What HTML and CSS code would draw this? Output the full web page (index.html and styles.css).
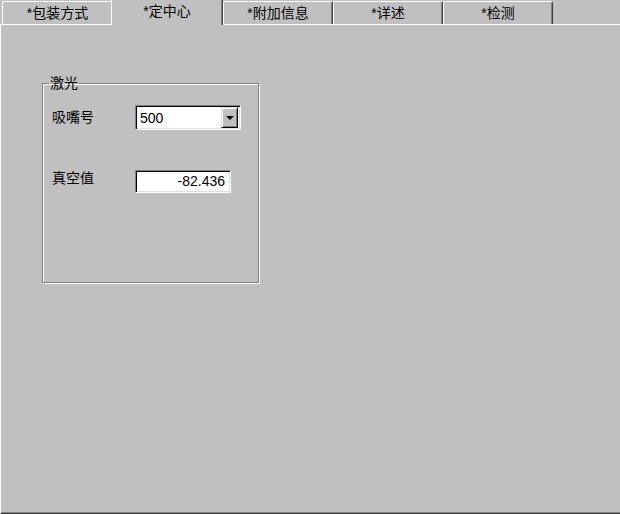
FILE: index.html
```html
<!DOCTYPE html>
<html lang="zh-CN">
<head>
    <meta charset="UTF-8">
    <meta name="viewport" content="width=device-width, initial-scale=1.0">
    <title>定中心</title>
    <link rel="stylesheet" href="styles.css">
</head>
<body>

<div class="window">
    <div class="tabs">
        <div class="tab tab-first">*包装方式</div>
        <div class="tab tab-active">*定中心</div>
        <div class="tab">*附加信息</div>
        <div class="tab">*详述</div>
        <div class="tab">*检测</div>
    </div>

    <div class="panel">
        <fieldset class="group">
            <legend>激光</legend>
            <div class="rows">
                <div class="row">
                    <span class="label label-combo">吸嘴号</span>
                    <div class="combo">
                        <span class="combo-text">500</span>
                        <span class="combo-btn"><span class="arrow"></span></span>
                    </div>
                </div>
                <div class="row row-value">
                    <span class="label">真空值</span>
                    <div class="edit">-82.436</div>
                </div>
            </div>
        </fieldset>
    </div>
</div>

</body>
</html>
```

FILE: styles.css
```css
body {
    margin: 0;
    padding: 0;
    background-color: #c0c0c0;
    font-family: "Liberation Sans", "Noto Sans CJK SC", sans-serif;
    font-size: 14px;
    color: #000;
}
.window {
    height: 514px;
    display: flex;
    flex-direction: column;
    overflow: hidden;
}

/* tab strip */
.tabs {
    display: flex;
    align-items: flex-end;
    height: 25px;
    padding-left: 2px;
    border-bottom: 1px solid #fff;
    box-sizing: border-box;
}
.tab {
    width: 110px;
    height: 23px;
    box-sizing: border-box;
    display: flex;
    align-items: center;
    justify-content: center;
    border-top: 1px solid #fff;
    border-left: 1px solid #fff;
    border-right: 1px solid #404040;
    box-shadow: inset -1px 0 #808080;
    border-radius: 2px 2px 0 0;
    line-height: 16px;
}
.tab-first {
    border-right: none;
    box-shadow: none;
}
.tab-active {
    position: relative;
    z-index: 1;
    width: 112px;
    height: 26px;
    margin-left: -1px;
    margin-bottom: -1px;
    padding-bottom: 4px;
    background-color: #c0c0c0;
}

/* page body */
.panel {
    flex: 1;
    border-left: 1px solid #fff;
    border-bottom: 1px solid #404040;
    box-shadow: inset 0 -1px #808080;
}
.group {
    width: 217px;
    height: 208px;
    box-sizing: border-box;
    margin: 50px 0 0 41px;
    padding: 0;
    border: 1px solid #808080;
    box-shadow: inset 1px 1px #fff, 1px 1px #fff;
}
.group legend {
    margin-left: 6px;
    padding: 0 1px;
    line-height: 16px;
}
.rows {
    padding: 14px 0 0 9px;
}
.row {
    display: flex;
    align-items: flex-start;
}
.row-value {
    margin-top: 40px;
}
.label {
    width: 83px;
    line-height: 16px;
}
.label-combo {
    line-height: 25px;
}

/* sunken controls */
.combo,
.edit {
    box-sizing: border-box;
    background-color: #fff;
    border: 1px solid;
    border-color: #808080 #fff #fff #808080;
    box-shadow: inset 1px 1px #000, inset -1px -1px #dfdfdf;
}
.combo {
    width: 106px;
    height: 25px;
    display: flex;
    align-items: center;
    padding: 2px 2px 2px 4px;
}
.combo-text {
    flex: 1;
}
.combo-btn {
    width: 17px;
    height: 21px;
    box-sizing: border-box;
    display: flex;
    align-items: center;
    justify-content: center;
    background-color: #c0c0c0;
    border: 1px solid;
    border-color: #dfdfdf #000 #000 #dfdfdf;
    box-shadow: inset 1px 1px #fff, inset -1px -1px #808080;
}
.arrow {
    width: 0;
    height: 0;
    border-left: 4px solid transparent;
    border-right: 4px solid transparent;
    border-top: 4px solid #000;
}
.edit {
    width: 96px;
    height: 23px;
    line-height: 21px;
    padding-right: 5px;
    text-align: right;
}
```
